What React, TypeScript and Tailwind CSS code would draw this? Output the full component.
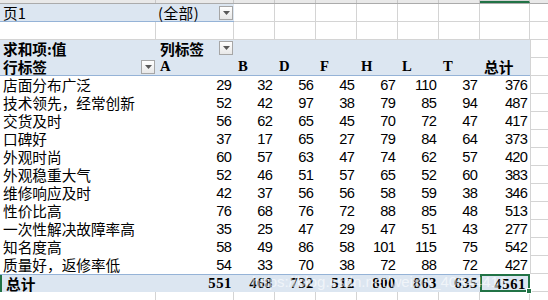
import React from 'react';

const cols = [
  { w: 'w-[156px]', letter: 'A' },
  { w: 'w-[78px]', letter: 'B' },
  { w: 'w-[41px]', letter: 'C' },
  { w: 'w-[41px]', letter: 'D' },
  { w: 'w-[41px]', letter: 'E' },
  { w: 'w-[41px]', letter: 'F' },
  { w: 'w-[41px]', letter: 'G' },
  { w: 'w-[41px]', letter: 'H' },
  { w: 'w-[50px]', letter: 'I' },
];

const valueWidths = cols.slice(1).map((c) => c.w);
const headers = ['A', 'B', 'D', 'F', 'H', 'L', 'T'];

const rows: [string, number[]][] = [
  ['店面分布广泛', [29, 32, 56, 45, 67, 110, 37, 376]],
  ['技术领先，经常创新', [52, 42, 97, 38, 79, 85, 94, 487]],
  ['交货及时', [56, 62, 65, 45, 70, 72, 47, 417]],
  ['口碑好', [37, 17, 65, 27, 79, 84, 64, 373]],
  ['外观时尚', [60, 57, 63, 47, 74, 62, 57, 420]],
  ['外观稳重大气', [52, 46, 51, 57, 65, 52, 60, 383]],
  ['维修响应及时', [42, 37, 56, 56, 58, 59, 38, 346]],
  ['性价比高', [76, 68, 76, 72, 88, 85, 48, 513]],
  ['一次性解决故障率高', [35, 25, 47, 29, 47, 51, 43, 277]],
  ['知名度高', [58, 49, 86, 58, 101, 115, 75, 542]],
  ['质量好，返修率低', [54, 33, 70, 38, 72, 88, 72, 427]],
];

const totals = [551, 468, 732, 512, 800, 863, 635, 4561];

const cjk = "font-['Noto_Sans_CJK_SC',sans-serif]";
const num = "font-['Liberation_Sans','Noto_Sans_CJK_SC',sans-serif] tracking-[-0.8px]";
const boldNum = "font-['Liberation_Serif',serif] font-bold tracking-[0.6px]";

const DropButton = ({ className = '' }: { className?: string }) => (
  <div className={`flex h-[14px] w-[14px] shrink-0 items-center justify-center border border-[#a6a6a6] bg-gradient-to-b from-[#ffffff] to-[#e8e8e8] ${className}`}>
    <svg width="7" height="4" viewBox="0 0 7 4">
      <path d="M0 0H7L3.5 4Z" fill="#595959" />
    </svg>
  </div>
);

// column J stub on the right, shows the sheet grid
const GridStub = () => <div className="h-full flex-1 border-b border-[#d4d4d4]" />;

export default function App() {
  return (
    <div className={`relative h-[300px] w-[548px] overflow-hidden bg-white text-[14.67px] text-black ${cjk}`}>
      {/* column letters, mostly scrolled off */}
      <div className="flex h-[4px] border-b border-[#ababab] bg-[#e9e9e9]">
        {cols.map((c) => (
          <div
            key={c.letter}
            className={`${c.w} h-full border-r border-[#c8c8c8] ${c.letter === 'I' ? 'border-b-2 border-b-[#217346] bg-[#d3d3d3]' : ''}`}
          />
        ))}
        <div className="flex-1" />
      </div>

      {/* row 1: page filter */}
      <div className="flex h-[18px]">
        <div className="flex w-[234px] items-center border-b border-[#95b3d7] bg-[#dce6f1]">
          <div className="w-[156px] pl-[3px] leading-[17px]">页1</div>
          <div className="flex flex-1 items-center justify-between pl-[2px] pr-[1px] leading-[17px]">
            <span className="tracking-[0.5px]">(全部)</span>
            <DropButton />
          </div>
        </div>
        {valueWidths.slice(1).map((w, i) => (
          <div key={i} className={`${w} border-b border-r border-[#d4d4d4]`} />
        ))}
        <GridStub />
      </div>

      {/* row 2: empty */}
      <div className="flex h-[18px]">
        {cols.map((c) => (
          <div key={c.letter} className={`${c.w} border-b border-r border-[#d4d4d4]`} />
        ))}
        <GridStub />
      </div>

      {/* row 3: value caption + column labels */}
      <div className="flex h-[18px]">
        <div className="flex w-[530px] items-center bg-[#dce6f1] font-bold leading-[18px]">
          <div className="w-[156px] pl-[3px]">求和项:值</div>
          <div className="flex h-full w-[78px] items-center justify-between pl-[4px] pr-[1px]">
            <span>列标签</span>
            <DropButton className="mb-[3px]" />
          </div>
        </div>
        <div className="flex-1 border-b border-l border-[#d4d4d4]" />
      </div>

      {/* row 4: row labels + column headers */}
      <div className="flex h-[18px]">
        <div className="flex w-[530px] items-center border-b border-[#95b3d7] bg-[#dce6f1] font-bold leading-[17px]">
          <div className="flex w-[156px] items-center justify-between pl-[3px] pr-[1px]">
            <span>行标签</span>
            <DropButton />
          </div>
          {headers.map((h, i) => (
            <div key={h} className={`${valueWidths[i]} pl-[4px] font-['Liberation_Serif',serif]`}>
              {h}
            </div>
          ))}
          <div className="w-[50px] pl-[4px]">总计</div>
        </div>
        <div className="flex-1 border-b border-l border-[#d4d4d4]" />
      </div>

      {/* data rows */}
      {rows.map(([label, vals]) => (
        <div key={label} className="flex h-[18px] leading-[18px]">
          <div className="w-[156px] whitespace-nowrap pl-[3px]">{label}</div>
          {vals.map((v, i) => (
            <div key={i} className={`${valueWidths[i]} pr-[3px] text-right ${num}`}>
              {v}
            </div>
          ))}
          <div className="flex-1 border-b border-l border-[#d4d4d4]" />
        </div>
      ))}

      {/* grand total */}
      <div className="flex h-[18px]">
        <div className="flex w-[530px] border-t border-[#95b3d7] bg-[#dce6f1] font-bold leading-[17px]">
          <div className="w-[156px] border-l-2 border-[#217346] pl-[4px]">总计</div>
          {totals.map((t, i) => (
            <div
              key={i}
              className={`${valueWidths[i]} text-right ${boldNum} ${i === 7 ? 'relative -mt-px -mr-px border-2 border-[#217346] pr-[2px]' : 'pr-[2px]'}`}
            >
              {t}
              {i === 7 && <div className="absolute -bottom-[4px] -right-[4px] h-[6px] w-[6px] border border-white bg-[#217346]" />}
            </div>
          ))}
        </div>
        <GridStub />
      </div>

      {/* next empty row */}
      <div className="flex h-[18px]">
        {cols.map((c) => (
          <div key={c.letter} className={`${c.w} border-b border-r border-[#d4d4d4]`} />
        ))}
        <GridStub />
      </div>

      {/* blog watermark */}
      <div className="pointer-events-none absolute left-[252px] top-[273px] font-['Liberation_Sans',sans-serif] text-[15px] leading-[18px] text-white/60">
        https://blog.csdn.net/weixin_40844416
      </div>
    </div>
  );
}
